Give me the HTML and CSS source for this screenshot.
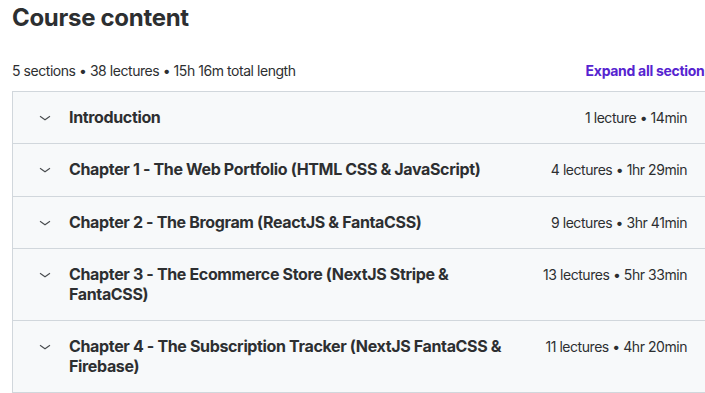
FILE: index.html
```html
<!DOCTYPE html>
<html lang="en">

<head>
    <meta charset="UTF-8">
    <meta name="viewport" content="width=device-width, initial-scale=1.0">
    <title>Course content</title>
    <link rel="stylesheet" href="styles.css">
</head>

<body>
    <div class="curriculum">
        <h2 class="curriculum-title">Course content</h2>

        <div class="curriculum-meta">
            <span>5 sections &bull; 38 lectures &bull; 15h 16m total length</span>
            <button class="expand-all">Expand all sections</button>
        </div>

        <div class="sections">
            <div class="section">
                <svg class="chevron" viewBox="0 0 16 16"><path d="M3 6.5l5 3.5 5-3.5"/></svg>
                <span class="section-title">Introduction</span>
                <span class="section-info">1 lecture &bull; 14min</span>
            </div>
            <div class="section">
                <svg class="chevron" viewBox="0 0 16 16"><path d="M3 6.5l5 3.5 5-3.5"/></svg>
                <span class="section-title">Chapter 1 - The Web Portfolio (HTML CSS &amp; JavaScript)</span>
                <span class="section-info">4 lectures &bull; 1hr 29min</span>
            </div>
            <div class="section">
                <svg class="chevron" viewBox="0 0 16 16"><path d="M3 6.5l5 3.5 5-3.5"/></svg>
                <span class="section-title">Chapter 2 - The Brogram (ReactJS &amp; FantaCSS)</span>
                <span class="section-info">9 lectures &bull; 3hr 41min</span>
            </div>
            <div class="section">
                <svg class="chevron" viewBox="0 0 16 16"><path d="M3 6.5l5 3.5 5-3.5"/></svg>
                <span class="section-title">Chapter 3 - The Ecommerce Store (NextJS Stripe &amp; FantaCSS)</span>
                <span class="section-info">13 lectures &bull; 5hr 33min</span>
            </div>
            <div class="section">
                <svg class="chevron" viewBox="0 0 16 16"><path d="M3 6.5l5 3.5 5-3.5"/></svg>
                <span class="section-title">Chapter 4 - The Subscription Tracker (NextJS FantaCSS &amp; Firebase)</span>
                <span class="section-info">11 lectures &bull; 4hr 20min</span>
            </div>
        </div>
    </div>
</body>

</html>
```

FILE: styles.css
```css
body {
    font-family: Inter, "Noto Sans", sans-serif;
    color: #2d2f31;
    background-color: #fff;
    margin: 0;
    padding: 0;
    overflow: hidden;
}

.curriculum {
    width: 700px;
    padding-left: 12px;
}

.curriculum-title {
    font-size: 24px;
    font-weight: 700;
    line-height: 1.2;
    letter-spacing: -0.3px;
    margin: 4px 0 0;
}

.curriculum-meta {
    display: flex;
    justify-content: space-between;
    align-items: center;
    font-size: 14px;
    letter-spacing: -0.45px;
    margin-top: 28px;
    height: 20px;
    margin-bottom: 10px;
}

.expand-all {
    background: none;
    border: none;
    padding: 0;
    font-family: inherit;
    font-size: 14px;
    font-weight: 700;
    letter-spacing: -0.3px;
    color: #5624d0;
    cursor: pointer;
}

.sections {
    border: 1px solid #d1d7dc;
    border-bottom: none;
}

.section {
    display: flex;
    align-items: flex-start;
    padding: 16px 24px;
    background-color: #f7f9fa;
    border-bottom: 1px solid #d1d7dc;
}

.chevron {
    width: 16px;
    height: 19.5px;
    flex-shrink: 0;
    margin-right: 16px;
    fill: none;
    stroke: #4a4d50;
    stroke-width: 1.1;
}

.section-title {
    flex: 1;
    font-size: 16px;
    font-weight: 700;
    line-height: 19.5px;
    letter-spacing: -0.35px;
}

.section-info {
    margin-left: 16px;
    font-size: 14px;
    line-height: 19.5px;
    letter-spacing: -0.45px;
    white-space: nowrap;
}
```
